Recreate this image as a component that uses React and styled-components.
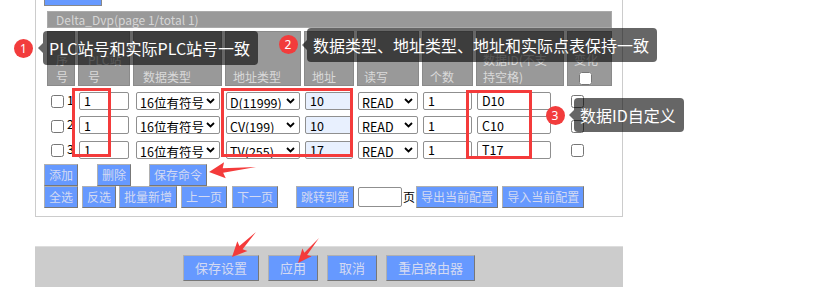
import styled, { createGlobalStyle } from "styled-components";

const GlobalStyle = createGlobalStyle`
  html, body {
    margin: 0;
    padding: 0;
    background: #fff;
  }
  body {
    font-family: "Noto Sans CJK SC", "Noto Sans", sans-serif;
    overflow: hidden;
  }
`;

const Page = styled.div`
  position: relative;
  width: 830px;
  height: 287px;
  overflow: hidden;
  display: flex;
  flex-direction: column;
`;

const Panel = styled.div`
  margin: -17px 0 0 35px;
  width: 588px;
  box-sizing: border-box;
  border: 1px solid #ccc;
  border-top: none;
  padding: 0 0 8px 8px;
`;

const TopButton = styled.button`
  display: block;
  width: 58px;
  height: 23px;
  background: #6699ff;
  border: 1px solid #888;
`;

const Table = styled.table`
  margin-top: 2px;
  border-collapse: separate;
  border-spacing: 3px;
`;

const TitleCell = styled.th`
  box-sizing: border-box;
  height: 17px;
  padding: 0 8px;
  background: #999;
  border: 1px solid #aaa;
  color: #d6d6d6;
  font-size: 12px;
  font-weight: normal;
  line-height: 15px;
  text-align: left;
`;

const HeadCell = styled.th`
  box-sizing: border-box;
  width: ${(p) => p.$w}px;
  height: 55px;
  padding: 0 0 0 ${(p) => p.$pl || 7}px;
  background: #999;
  border: 1px solid #8a8a8a;
  color: #d9d9d9;
  font-size: 12px;
  font-weight: normal;
  line-height: 17px;
  text-align: left;
  vertical-align: bottom;
`;

const Cell = styled.td`
  padding: 1px;
  height: 18px;
  font-size: 12.5px;
  line-height: 18px;
  vertical-align: middle;
  white-space: nowrap;
`;

const Check = styled.input.attrs({ type: "checkbox" })`
  width: 13px;
  height: 13px;
  margin: 0 0 0 ${(p) => p.$ml || 0}px;
  vertical-align: middle;
`;

const RowNo = styled.span`
  margin-left: 3px;
  font-size: 12.5px;
  color: #000;
`;

const TextInput = styled.input`
  box-sizing: border-box;
  width: ${(p) => p.$w}px;
  height: 18px;
  margin: 0;
  padding: 0 0 0 4px;
  border: 1px solid #8f8f8f;
  border-radius: 2px;
  background: ${(p) => p.$bg || "#fff"};
  font-family: inherit;
  font-size: 12.5px;
  color: #000;
  vertical-align: middle;
`;

const SelectWrap = styled.span`
  position: relative;
  display: inline-block;
  width: ${(p) => p.$w}px;
  height: 18px;
  margin-left: ${(p) => p.$ml || 0}px;
  vertical-align: middle;
`;

const Select = styled.select`
  appearance: none;
  box-sizing: border-box;
  width: 100%;
  height: 18px;
  margin: 0;
  padding: 0 0 0 3px;
  border: 1px solid #8f8f8f;
  border-radius: 2px;
  background: #fff;
  font-family: inherit;
  font-size: 12.5px;
  color: #000;
`;

const Chevron = styled.svg`
  position: absolute;
  right: 5px;
  top: 6px;
  pointer-events: none;
`;

const ButtonRow = styled.div`
  display: flex;
  align-items: center;
  margin-top: ${(p) => p.$mt || 0}px;
`;

const BlueButton = styled.button`
  box-sizing: border-box;
  height: 22px;
  margin: 0 0 0 ${(p) => p.$ml || 0}px;
  padding: 0 4px;
  background: #6699ff;
  border: 1px solid;
  border-color: #b0b0b0 #777 #777 #b0b0b0;
  color: #d3d9f2;
  font-family: inherit;
  font-size: 12px;
  white-space: nowrap;
`;

const PageInput = styled.input`
  box-sizing: border-box;
  width: 44px;
  height: 20px;
  margin-left: 4px;
  border: 1px solid #8f8f8f;
  border-radius: 2px;
`;

const PageLabel = styled.span`
  margin-left: 1px;
  font-size: 12px;
  color: #000;
`;

const BottomBar = styled.div`
  margin: 29px 0 0 35px;
  width: 588px;
  height: 42px;
  box-sizing: border-box;
  padding-top: 8px;
  background: #ccc;
  border-top: 1px solid #ddd;
  display: flex;
  justify-content: center;
  align-items: flex-start;
  gap: 9px;
`;

const BigButton = styled(BlueButton)`
  height: 26px;
  padding: 0 11px;
  font-size: 13px;
`;

const Strip = styled.div`
  flex: 1;
  background: #f0f0f0;
`;

/* annotation layer drawn over the screenshot */
const Overlay = styled.div`
  position: absolute;
  inset: 0;
  pointer-events: none;
`;

const RedBox = styled.div`
  position: absolute;
  left: ${(p) => p.$x}px;
  top: ${(p) => p.$y}px;
  width: ${(p) => p.$w}px;
  height: ${(p) => p.$h}px;
  box-sizing: border-box;
  border: 3px solid #f43b3b;
`;

const Badge = styled.div`
  position: absolute;
  left: ${(p) => p.$x - 9.5}px;
  top: ${(p) => p.$y - 9.5}px;
  width: 19px;
  height: 19px;
  border-radius: 50%;
  background: #f23c3c;
  color: #fff;
  font-family: "Noto Sans", sans-serif;
  font-size: 12px;
  line-height: 19px;
  text-align: center;
`;

const Tip = styled.div`
  position: absolute;
  left: ${(p) => p.$x}px;
  top: ${(p) => p.$y}px;
  height: 34px;
  padding: 0 8px 0 6px;
  border-radius: 4px;
  background: rgba(0, 0, 0, 0.6);
  color: #fff;
  font-size: 16px;
  line-height: 34px;
  white-space: nowrap;

  &::before {
    content: "";
    position: absolute;
    left: -5px;
    top: 12px;
    border-style: solid;
    border-width: 5px 5px 5px 0;
    border-color: transparent rgba(0, 0, 0, 0.6) transparent transparent;
  }
`;

const Arrows = styled.svg`
  position: absolute;
  left: 0;
  top: 0;
`;

const arrowPoints = (tx, ty, hx, hy, head, wing, shaft) => {
  const dx = hx - tx;
  const dy = hy - ty;
  const len = Math.hypot(dx, dy);
  const ux = dx / len;
  const uy = dy / len;
  const px = -uy;
  const py = ux;
  const bx = hx - ux * head;
  const by = hy - uy * head;
  const pts = [
    [tx, ty],
    [bx + px * shaft, by + py * shaft],
    [bx + px * wing - ux * 2, by + py * wing - uy * 2],
    [hx, hy],
    [bx - px * wing - ux * 2, by - py * wing - uy * 2],
    [bx - px * shaft, by - py * shaft],
  ];
  return pts.map((p) => p.join(",")).join(" ");
};

const RedArrow = ({ from, to, head = 13, wing = 7, shaft = 2.2 }) => (
  <polygon
    points={arrowPoints(from[0], from[1], to[0], to[1], head, wing, shaft)}
    fill="#f43b3b"
  />
);

const Dropdown = ({ w, ml, value }) => (
  <SelectWrap $w={w} $ml={ml}>
    <Select defaultValue={value}>
      <option>{value}</option>
    </Select>
    <Chevron width="9" height="6" viewBox="0 0 9 6">
      <path d="M1 1l3.5 3.5L8 1" fill="none" stroke="#000" strokeWidth="1.8" />
    </Chevron>
  </SelectWrap>
);

const rows = [
  { n: 1, addrType: "D(11999)", addr: "10", id: "D10" },
  { n: 2, addrType: "CV(199)", addr: "10", id: "C10" },
  { n: 3, addrType: "TV(255)", addr: "17", id: "T17" },
];

const App = () => {
  return (
    <Page>
      <GlobalStyle />
      <Panel>
        <TopButton />
        <Table>
          <thead>
            <tr>
              <TitleCell colSpan={9}>Delta_Dvp(page 1/total 1)</TitleCell>
            </tr>
            <tr>
              <HeadCell $w={28} $pl={8}>序<br />号</HeadCell>
              <HeadCell $w={52} $pl={9}>PLC站<br />号</HeadCell>
              <HeadCell $w={89} $pl={9}>数据类型</HeadCell>
              <HeadCell $w={76}>地址类型</HeadCell>
              <HeadCell $w={50}>地址</HeadCell>
              <HeadCell $w={62} $pl={6}>读写</HeadCell>
              <HeadCell $w={50}>个数</HeadCell>
              <HeadCell $w={88} $pl={6}>数据ID(不支<br />持空格)</HeadCell>
              <HeadCell $w={45} $pl={6}>
                变化<br />
                <Check $ml={5} />
              </HeadCell>
            </tr>
          </thead>
          <tbody>
            {rows.map((r) => (
              <tr key={r.n}>
                <Cell>
                  <Check $ml={3} />
                  <RowNo>{r.n}</RowNo>
                </Cell>
                <Cell>
                  <TextInput $w={50} defaultValue="1" />
                </Cell>
                <Cell>
                  <Dropdown w={84} ml={2} value="16位有符号" />
                </Cell>
                <Cell>
                  <Dropdown w={74} value={r.addrType} />
                </Cell>
                <Cell>
                  <TextInput $w={48} $bg="#e8f0fe" defaultValue={r.addr} />
                </Cell>
                <Cell>
                  <Dropdown w={60} value="READ" />
                </Cell>
                <Cell>
                  <TextInput $w={49} defaultValue="1" />
                </Cell>
                <Cell>
                  <TextInput $w={74} defaultValue={r.id} />
                </Cell>
                <Cell>
                  <Check $ml={3} />
                </Cell>
              </tr>
            ))}
          </tbody>
        </Table>
        <ButtonRow $mt={1}>
          <BlueButton>添加</BlueButton>
          <BlueButton $ml={19}>删除</BlueButton>
          <BlueButton $ml={18}>保存命令</BlueButton>
        </ButtonRow>
        <ButtonRow>
          <BlueButton>全选</BlueButton>
          <BlueButton $ml={4}>反选</BlueButton>
          <BlueButton $ml={3}>批量新增</BlueButton>
          <BlueButton $ml={4}>上一页</BlueButton>
          <BlueButton $ml={5}>下一页</BlueButton>
          <BlueButton $ml={18}>跳转到第</BlueButton>
          <PageInput />
          <PageLabel>页</PageLabel>
          <BlueButton $ml={1}>导出当前配置</BlueButton>
          <BlueButton $ml={4}>导入当前配置</BlueButton>
        </ButtonRow>
      </Panel>
      <BottomBar>
        <BigButton>保存设置</BigButton>
        <BigButton>应用</BigButton>
        <BigButton>取消</BigButton>
        <BigButton>重启路由器</BigButton>
      </BottomBar>
      <Strip />

      <Overlay>
        <RedBox $x={72} $y={88} $w={39} $h={69} />
        <RedBox $x={221} $y={88} $w={132} $h={69} />
        <RedBox $x={466} $y={90} $w={66} $h={69} />

        <Badge $x={23.5} $y={48}>1</Badge>
        <Tip $x={43} $y={31}>PLC站号和实际PLC站号一致</Tip>
        <Badge $x={288} $y={44}>2</Badge>
        <Tip $x={307} $y={28}>数据类型、地址类型、地址和实际点表保持一致</Tip>
        <Badge $x={555} $y={115}>3</Badge>
        <Tip $x={574} $y={98}>数据ID自定义</Tip>

        <Arrows width="830" height="287" viewBox="0 0 830 287">
          <RedArrow from={[256, 167]} to={[209, 172]} head={14} wing={8} />
          <RedArrow from={[256, 232]} to={[232, 257]} head={13} wing={7} />
          <RedArrow from={[319, 238]} to={[298, 263]} head={12} wing={6} shaft={1.8} />
        </Arrows>
      </Overlay>
    </Page>
  );
};

export default App;
